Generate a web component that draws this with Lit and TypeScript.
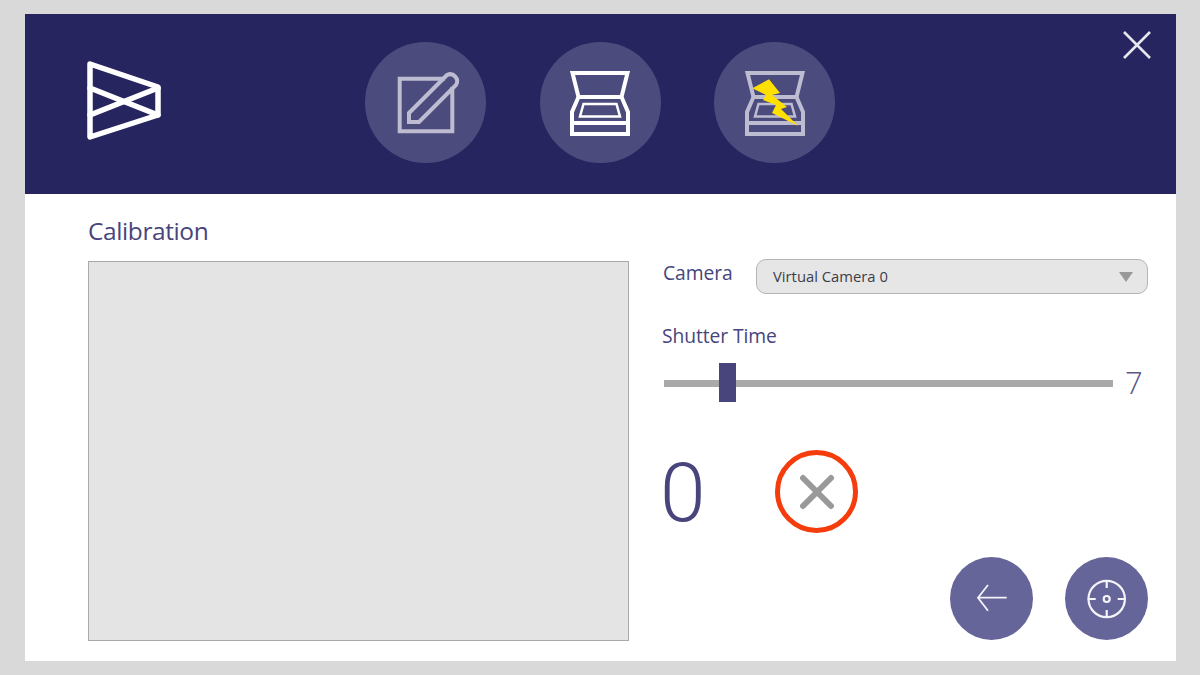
import { LitElement, html, svg, css } from "lit";
import { customElement } from "lit/decorators.js";

@customElement("app-root")
export class AppRoot extends LitElement {
  static styles = css`
    :host { display: block; width: 1200px; height: 675px; background: #d9d9d9; font-family: "Open Sans", sans-serif; color: #47457c; overflow: hidden; }
    .panel { margin: 14px 24px 0 25px; width: 1151px; height: 647px; background: #fff; display: flex; flex-direction: column; }
    .top { height: 180px; background: #272560; display: flex; align-items: flex-start; flex: none; }
    .logo { margin: 46px 0 0 61px; width: 76px; height: 82px; flex: none; display: block; }
    .nav { display: flex; gap: 53.5px; margin: 28px 0 0 203px; }
    .nav-btn { width: 121px; height: 121px; border-radius: 50%; background: #4c4b7d; display: flex; align-items: center; justify-content: center; }
    .nav-btn svg { display: block; width: 121px; height: 121px; }
    .close { margin: 16px 24px 0 auto; width: 30px; height: 30px; display: block; }
    .body { flex: 1; padding: 20px 28px 20px 63px; display: flex; flex-direction: column; }
    h1 { margin: 0; font-size: 24.5px; line-height: 34px; font-weight: 400; height: 47px; letter-spacing: -0.4px; }
    .cols { display: flex; flex: 1; }
    .preview { width: 541px; height: 380px; box-sizing: border-box; background: #e4e4e4; border: 1px solid #aaa; flex: none; }
    .side { flex: 1; padding-left: 33px; margin-top: -2px; display: flex; flex-direction: column; }
    .cam-row { display: flex; align-items: center; height: 35px; }
    .cam-label { font-size: 19.3px; line-height: 26px; width: 94px; padding-left: 1px; box-sizing: border-box; margin-top: -7px; letter-spacing: -0.1px; }
    .select { flex: 1; height: 35px; box-sizing: border-box; background: #e6e6e6; border: 1px solid #b4b4b4; border-radius: 10px; display: flex; align-items: center; justify-content: space-between; padding: 0 14px 2px 16px; font-size: 14.8px; color: #3d3d48; }
    .arrow { width: 0; height: 0; margin-top: 2px; border-left: 7.5px solid transparent; border-right: 7.5px solid transparent; border-top: 10px solid #999; }
    .shutter { font-size: 19.3px; line-height: 26px; margin-top: 29px; letter-spacing: -0.1px; }
    .slider-row { display: flex; align-items: center; height: 40px; margin-top: 14px; }
    .slider { width: 449px; margin-left: 2px; height: 40px; display: flex; align-items: center; position: relative; flex: none; }
    .track { width: 100%; height: 7px; background: #a9a9a9; }
    .thumb { position: absolute; width: 17px; height: 39px; top: 0; background: #47457c; }
    .val { font-weight: 300; font-size: 31px; line-height: 38px; height: 40px; margin-left: 12px; color: #5a5985; }
    .count-row { display: flex; align-items: center; margin-top: 47px; height: 83px; }
    .count { font-family: "Roboto", sans-serif; font-weight: 300; font-size: 82px; line-height: 83px; width: 115px; flex: none; margin-left: -2px; padding-top: 4px; }
    .cancel { width: 83px; height: 83px; box-sizing: border-box; border: 5px solid #f43c0c; border-radius: 50%; display: flex; align-items: center; justify-content: center; }
    .cancel svg { width: 36px; height: 36px; display: block; }
    .actions { display: flex; justify-content: flex-end; gap: 32px; margin-top: 24px; }
    .round { width: 83px; height: 83px; border-radius: 50%; background: #66659a; display: flex; align-items: center; justify-content: center; }
    .round svg { width: 83px; height: 83px; display: block; }
  `;

  private scanner(color: string) {
    return svg`<g fill="none" stroke="${color}" stroke-width="4" stroke-linejoin="miter">
      <path d="M32.5 31 H87.5 L81.5 55 H38.5 Z" />
      <path d="M38.5 55 L32 70 V92 H88 V70 L81.5 55" />
      <path d="M32 81 H88" />
      <path d="M43.5 62 H76.5 L80 74.5 H40 Z" stroke-width="2.5" />
    </g>`;
  }

  render() {
    return html`
      <div class="panel">
        <div class="top">
          <svg class="logo" viewBox="0 0 76 82" fill="none" stroke="#fff" stroke-width="5.5" stroke-linejoin="round" stroke-linecap="round">
            <path d="M4 4 L72 27 V55 L4 77 Z" />
            <path d="M4 28 L72 55" />
            <path d="M4 55 L72 28" />
          </svg>
          <div class="nav">
            <div class="nav-btn">
              <svg viewBox="0 0 121 121" fill="none" stroke="#bdbcd1" stroke-width="4">
                <path d="M80 36.7 H34.7 V89.3 H87.3 V45" />
                <path d="M44 71 L82 33 A7 7 0 0 1 91 43 L54 80 H44 Z" />
              </svg>
            </div>
            <div class="nav-btn">
              <svg viewBox="0 0 121 121">${this.scanner("#fff")}</svg>
            </div>
            <div class="nav-btn">
              <svg viewBox="0 0 121 121">
                <g transform="translate(1 0)">${this.scanner("#bdbcd1")}</g>
                <path d="M38.3 46.3 L55 37.3 L66 51 L58 53 L73 65 L67 67 L84.3 84 L58 71 L62 63 L49 58 L52 53 Z" fill="#ffe000" />
              </svg>
            </div>
          </div>
          <svg class="close" viewBox="0 0 30 30" stroke="#e6e6ee" stroke-width="2.6" fill="none">
            <path d="M2 2 L28 28 M28 2 L2 28" />
          </svg>
        </div>
        <div class="body">
          <h1>Calibration</h1>
          <div class="cols">
            <div class="preview"></div>
            <div class="side">
              <div class="cam-row">
                <div class="cam-label">Camera</div>
                <div class="select"><span>Virtual Camera 0</span><span class="arrow"></span></div>
              </div>
              <div class="shutter">Shutter Time</div>
              <div class="slider-row">
                <div class="slider"><div class="track"></div><div class="thumb" style="left: 55px"></div></div>
                <div class="val">7</div>
              </div>
              <div class="count-row">
                <div class="count">0</div>
                <div class="cancel">
                  <svg viewBox="0 0 36 36" stroke="#999" stroke-width="6" stroke-linecap="round"><path d="M4 4 L32 32 M32 4 L4 32" /></svg>
                </div>
              </div>
              <div class="actions">
                <div class="round">
                  <svg viewBox="0 0 83 83" fill="none" stroke="#f4f4f8" stroke-width="1.8"><path d="M28 40.7 H56.7 M38 28 L28 40.7 L38 53.7" /></svg>
                </div>
                <div class="round">
                  <svg viewBox="0 0 83 83" fill="none" stroke="#f4f4f8" stroke-width="2.2"><circle cx="41.7" cy="42" r="18.2" /><circle cx="41.7" cy="42" r="3" /><path d="M41.7 23 V31 M41.7 53 V61 M22.7 42 H30.7 M52.7 42 H60.7" /></svg>
                </div>
              </div>
            </div>
          </div>
        </div>
      </div>
    `;
  }
}
